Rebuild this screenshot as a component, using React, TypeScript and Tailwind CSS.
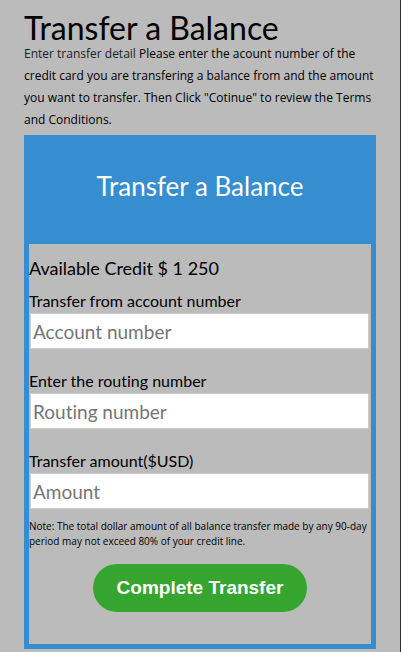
type FieldProps = {
  id: string;
  label: string;
  placeholder: string;
};

function Field({ id, label, placeholder }: FieldProps) {
  return (
    <div className="flex flex-col">
      <label htmlFor={id} className="text-base leading-6">
        {label}
      </label>
      <input
        id={id}
        type="text"
        placeholder={placeholder}
        className="mr-0.5 ml-px h-9 border border-[#ccc] bg-white px-0.5 text-[19px] text-black placeholder:text-[#757575]"
      />
    </div>
  );
}

export default function App() {
  return (
    <main className="min-h-screen border-r border-[#25313a] bg-[#bbb] px-6 pt-3 pb-[3px] font-['Lato',sans-serif] text-black [font-variant-ligatures:none]">
      <h1 className="text-[32px] leading-[31px]">Transfer a Balance</h1>
      <p className="font-['Open_Sans',sans-serif] text-xs leading-[22px]">
        <span className="text-[#222]">Enter transfer detail</span> Please enter
        the acount number of the credit card you are transfering a balance from
        and the amount you want to transfer. Then Click "Cotinue" to review the
        Terms and Conditions.
      </p>

      <section className="mt-1 border-5 border-[#368dd0]">
        <h2 className="bg-[#368dd0] pt-[30px] pb-[42px] text-center text-[26px] leading-8 text-white">
          Transfer a Balance
        </h2>
        <form className="pt-2 pb-8">
          <p className="text-lg leading-8">Available Credit $ 1 250</p>
          <div className="mt-[5px] flex flex-col gap-5">
            <Field
              id="account"
              label="Transfer from account number"
              placeholder="Account number"
            />
            <Field
              id="routing"
              label="Enter the routing number"
              placeholder="Routing number"
            />
            <Field
              id="amount"
              label="Transfer amount($USD)"
              placeholder="Amount"
            />
          </div>
          <p className="mt-2.5 font-['Open_Sans',sans-serif] text-[10px] leading-[15px]">
            Note: The total dollar amount of all balance transfer made by any
            90-day period may not exceed 80% of your credit line.
          </p>
          <div className="mt-[15px] flex justify-center">
            <button
              type="button"
              className="h-12 rounded-full bg-[#35a52f] px-6 font-['Liberation_Sans',Arial,sans-serif] text-[19px] font-bold text-white"
            >
              Complete Transfer
            </button>
          </div>
        </form>
      </section>
    </main>
  );
}
